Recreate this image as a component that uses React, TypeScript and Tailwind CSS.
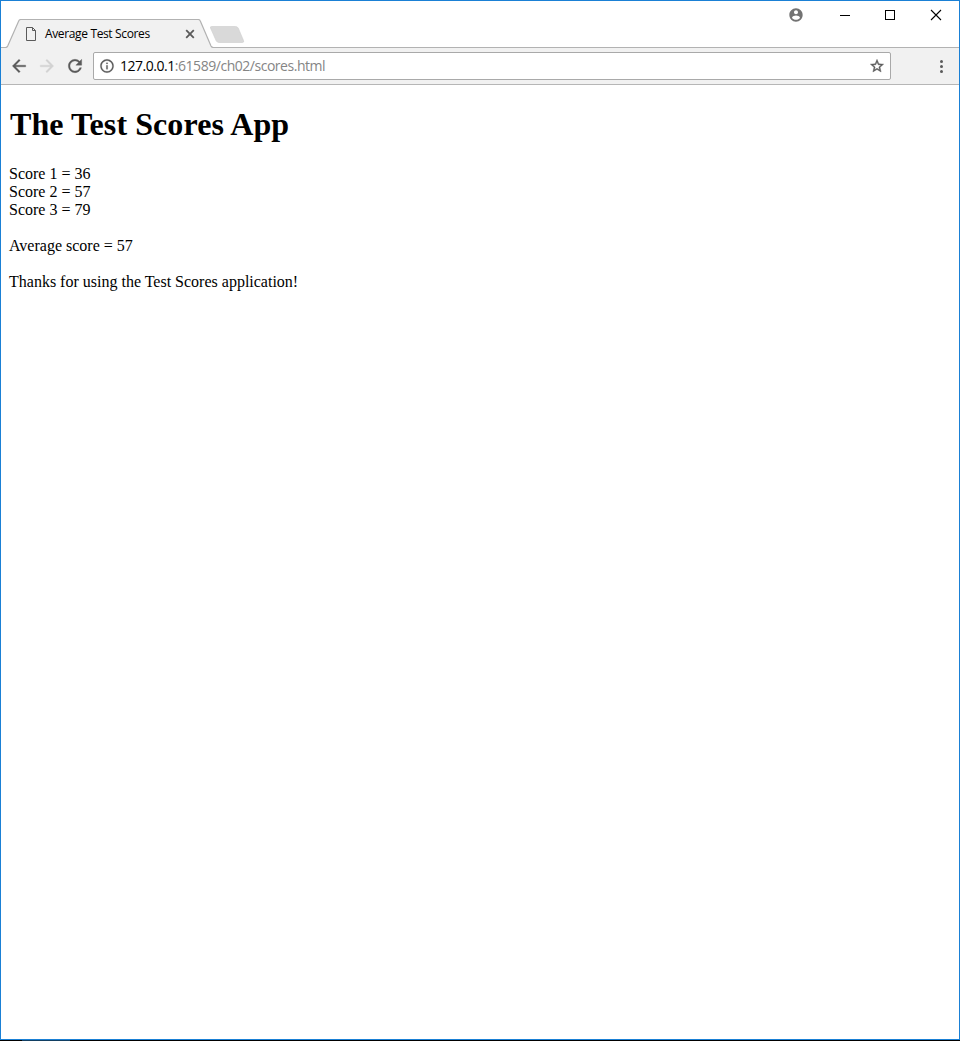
import type { ReactNode } from 'react';

function MaterialIcon({ d, className }: { d: string; className: string }) {
  return (
    <svg viewBox="0 0 24 24" fill="currentColor" stroke="currentColor" className={className}>
      <path d={d} />
    </svg>
  );
}

function CaptionButton({ label, children }: { label: string; children: ReactNode }) {
  return (
    <button aria-label={label} className="flex h-[28px] w-[46px] items-center justify-center">
      <svg width="12" height="12" viewBox="0 0 12 12" fill="none" stroke="#000" shapeRendering="crispEdges">
        {children}
      </svg>
    </button>
  );
}

function Tab() {
  return (
    <div className="relative h-[29px] w-[245px]">
      <svg width="245" height="29" viewBox="0 0 245 29" className="absolute inset-0">
        <path d="M0 28.5H4.5Q6 28.5 6.7 27L17.7 2Q18.4 .5 20 .5H197Q198.700 .5 199.300 2L210 27Q210.700 28.500 212.500 28.500H245V29H0Z" fill="#f1f1f1" />
        <path d="M0 28.5H4.5Q6 28.5 6.7 27L17.7 2Q18.4 .5 20 .5H197Q198.700 .5 199.300 2L210 27Q210.700 28.500 212.500 28.500H245" fill="none" stroke="#b2b2b2" strokeWidth="1.2" />
        <path d="M210.500 7.500H234.500Q236.500 7.500 237.300 9.200L242.500 21.500Q243.300 23.500 241.500 23.500H218Q216 23.500 215.200 21.800L209.500 9Q209 7.500 210.500 7.500Z" fill="#d9d9d9" stroke="#cdcdcd" strokeOpacity=".6" />
      </svg>
      <div className="relative flex h-full items-center pl-[24px]">
        <svg width="12" height="14" viewBox="0 0 12 14" fill="none" stroke="#5a5a5a" className="mt-px shrink-0">
          <path d="M1.500 .5H7.500L10.500 3.500V13.500H1.500ZM7.500 .5V3.500H10.500" />
        </svg>
        <span className="ml-[8px] w-[139px] whitespace-nowrap pt-px font-['Open_Sans',sans-serif] text-[12px] leading-[16px] tracking-[-0.36px] text-black">
          Average Test Scores
        </span>
        <svg width="10" height="10" viewBox="0 0 10 10" stroke="#5a5a5a" strokeWidth="1.8" className="mt-px ml-px">
          <path d="M1.200 1.200L8.800 8.800M8.800 1.200L1.200 8.800" />
        </svg>
      </div>
    </div>
  );
}

export default function App() {
  return (
    <div className="flex h-[1041px] w-[960px] flex-col bg-black">
      <div className="flex h-[1040px] flex-col border border-[#1a80d5] bg-white">
        <header className="flex h-[47px] justify-between">
          <div className="flex items-end">
            <Tab />
          </div>
          <div className="flex h-[47px] flex-1 flex-col justify-between">
            <div className="flex justify-end">
              <button aria-label="Profile" className="mr-[17px] flex h-[28px] w-[18px] items-center justify-center">
                <MaterialIcon
                  className="h-[16px] w-[16px] shrink-0 stroke-0 text-[#737373]"
                  d="M12 2C6.480 2 2 6.480 2 12s4.480 10 10 10 10-4.480 10-10S17.520 2 12 2zm0 3c1.660 0 3 1.340 3 3s-1.340 3-3 3-3-1.340-3-3 1.340-3 3-3zm0 14.200c-2.500 0-4.710-1.280-6-3.220.03-1.990 4-3.080 6-3.080 1.990 0 5.970 1.090 6 3.080-1.290 1.940-3.500 3.220-6 3.220z"
                />
              </button>
              <div className="-mr-px">
                <CaptionButton label="Minimize">
                  <path d="M1 6.500H11" />
                </CaptionButton>
              </div>
              <CaptionButton label="Maximize">
                <path d="M1.500 1.500H10.500V10.500H1.500Z" />
              </CaptionButton>
              <CaptionButton label="Close">
                <path d="M1 1L11 11M11 1L1 11" shapeRendering="auto" strokeWidth="1.100" />
              </CaptionButton>
            </div>
            <div className="h-px bg-[#b2b2b2]" />
          </div>
        </header>

        <nav className="flex h-[37px] items-center border-b border-[#b6b6b6] bg-[#f1f1f1] pl-[8px] text-[#5a5a5a]">
          <MaterialIcon className="h-[20px] w-[20px] stroke-[0.4]" d="M20 11H7.830l5.590-5.590L12 4l-8 8 8 8 1.410-1.410L7.830 13H20v-2z" />
          <MaterialIcon className="ml-[8px] h-[20px] w-[20px] stroke-[0.4] text-[#d2d2d2]" d="M12 4l-1.410 1.410L16.170 11H4v2h12.170l-5.580 5.590L12 20l8-8z" />
          <MaterialIcon className="ml-[8px] h-[20px] w-[20px] stroke-[0.4]" d="M17.650 6.350C16.200 4.900 14.210 4 12 4c-4.420 0-7.990 3.580-7.990 8s3.570 8 7.990 8c3.730 0 6.840-2.550 7.730-6h-2.080c-.82 2.330-3.040 4-5.650 4-3.310 0-6-2.690-6-6s2.690-6 6-6c1.660 0 3.140.69 4.220 1.780L13 11h7V4l-2.350 2.350z" />
          <div className="ml-[8px] flex h-[28px] w-[798px] items-center rounded-[2px] border border-[#a9a9a9] bg-white pl-[5px]">
            <MaterialIcon className="h-[16px] w-[16px] stroke-[0.3]" d="M11 17h2v-6h-2v6zm1-15C6.480 2 2 6.480 2 12s4.480 10 10 10 10-4.480 10-10S17.520 2 12 2zm0 18c-4.410 0-8-3.590-8-8s3.590-8 8-8 8 3.590 8 8-3.590 8-8 8zM11 9h2V7h-2v2z" />
            <span className="ml-[5px] flex-1 whitespace-nowrap font-['Open_Sans',sans-serif] text-[14px] leading-[20px] tracking-[-0.47px] text-[#858585]">
              <span className="text-black">127.0.0.1</span>:61589/ch02/scores.html
            </span>
            <MaterialIcon className="mr-[5px] h-[16px] w-[16px] stroke-[0.6]" d="M22 9.240l-7.190-.62L12 2 9.190 8.630 2 9.240l5.460 4.730L5.820 21 12 17.270 18.180 21l-1.630-7.030L22 9.240zM12 15.400l-3.760 2.270 1-4.280-3.320-2.880 4.380-.38L12 6.100l1.710 4.040 4.380.38-3.320 2.880 1 4.280L12 15.400z" />
          </div>
          <svg width="4" height="14" viewBox="0 0 4 14" fill="currentColor" className="ml-[48px]">
            <circle cx="2.500" cy="2.500" r="1.500" />
            <circle cx="2.500" cy="7.500" r="1.500" />
            <circle cx="2.500" cy="12.500" r="1.500" />
          </svg>
        </nav>

        <main className="flex-1 px-[8px] pt-[21px] font-['Liberation_Serif',serif] text-[16px] leading-[18px] text-black">
          <h1 className="pl-px text-[32px] leading-[37px] font-bold tracking-[0.08px]">The Test Scores App</h1>
          <div className="mt-[22px]">
            <p>Score 1 = 36</p>
            <p>Score 2 = 57</p>
            <p>Score 3 = 79</p>
          </div>
          <p className="mt-[18px]">Average score = 57</p>
          <p className="mt-[18px]">Thanks for using the Test Scores application!</p>
        </main>
      </div>
      <div className="flex h-px pl-[22px]">
        <div className="w-[48px] bg-[#123f62]" />
      </div>
    </div>
  );
}
